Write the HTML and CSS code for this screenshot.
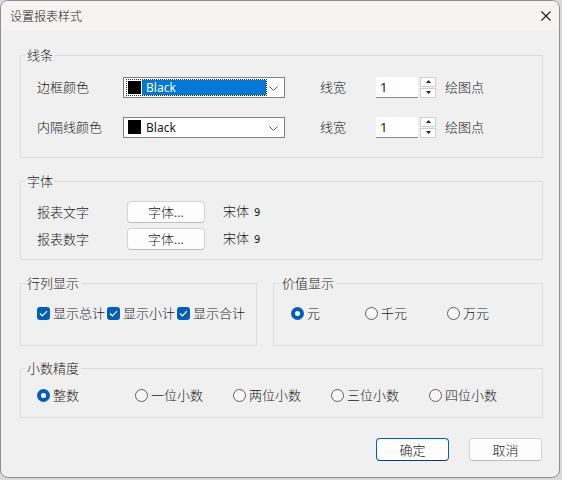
FILE: index.html
```html
<!DOCTYPE html>
<html lang="zh-CN">
<head>
  <meta charset="UTF-8" />
  <title>设置报表样式</title>
  <link rel="stylesheet" href="styles.css">
</head>
<body>
  <div class="dialog">
    <div class="titlebar">
      <span class="title">设置报表样式</span>
      <svg class="close" width="10" height="10" viewBox="0 0 10 10">
        <path d="M0.5 0.5L9.5 9.5M9.5 0.5L0.5 9.5" stroke="#1b1b1b" stroke-width="1.1" fill="none"/>
      </svg>
    </div>

    <div class="client">
      <fieldset class="group group-lines">
        <legend>线条</legend>
        <div class="rows">
          <div class="line-row">
            <span class="lbl">边框颜色</span>
            <div class="combo">
              <span class="focus-rect">
                <span class="swatch"></span>
                <span class="sel">Black</span>
              </span>
              <svg class="chev" width="9" height="5" viewBox="0 0 9 5"><path d="M0.5 0.5L4.5 4.5L8.5 0.5" stroke="#555" fill="none"/></svg>
            </div>
            <span class="lbl-w">线宽</span>
            <div class="spin">
              <span class="spin-input">1</span>
              <span class="spin-btns">
                <span class="sb"><svg width="5" height="3" viewBox="0 0 5 3"><path d="M0 3L2.5 0L5 3Z" fill="#222"/></svg></span>
                <span class="sb"><svg width="5" height="3" viewBox="0 0 5 3"><path d="M0 0L2.5 3L5 0Z" fill="#222"/></svg></span>
              </span>
            </div>
            <span class="unit">绘图点</span>
          </div>
          <div class="line-row">
            <span class="lbl">内隔线颜色</span>
            <div class="combo">
              <span class="swatch"></span>
              <span class="val">Black</span>
              <svg class="chev" width="9" height="5" viewBox="0 0 9 5"><path d="M0.5 0.5L4.5 4.5L8.5 0.5" stroke="#555" fill="none"/></svg>
            </div>
            <span class="lbl-w">线宽</span>
            <div class="spin">
              <span class="spin-input">1</span>
              <span class="spin-btns">
                <span class="sb"><svg width="5" height="3" viewBox="0 0 5 3"><path d="M0 3L2.5 0L5 3Z" fill="#222"/></svg></span>
                <span class="sb"><svg width="5" height="3" viewBox="0 0 5 3"><path d="M0 0L2.5 3L5 0Z" fill="#222"/></svg></span>
              </span>
            </div>
            <span class="unit">绘图点</span>
          </div>
        </div>
      </fieldset>

      <fieldset class="group group-font">
        <legend>字体</legend>
        <div class="rows">
          <div class="font-row">
            <span class="lbl">报表文字</span>
            <button class="btn">字体...</button>
            <span class="font-name">宋体 <span class="size">9</span></span>
          </div>
          <div class="font-row">
            <span class="lbl">报表数字</span>
            <button class="btn">字体...</button>
            <span class="font-name">宋体 <span class="size">9</span></span>
          </div>
        </div>
      </fieldset>

      <div class="pair">
        <fieldset class="group group-rowcol">
          <legend>行列显示</legend>
          <div class="opts">
            <label class="check"><span class="cb"><svg width="9" height="7" viewBox="0 0 9 7"><path d="M1 3.5L3.4 5.8L8 1.2" stroke="#fff" stroke-width="1.2" fill="none"/></svg></span>显示总计</label>
            <label class="check"><span class="cb"><svg width="9" height="7" viewBox="0 0 9 7"><path d="M1 3.5L3.4 5.8L8 1.2" stroke="#fff" stroke-width="1.2" fill="none"/></svg></span>显示小计</label>
            <label class="check"><span class="cb"><svg width="9" height="7" viewBox="0 0 9 7"><path d="M1 3.5L3.4 5.8L8 1.2" stroke="#fff" stroke-width="1.2" fill="none"/></svg></span>显示合计</label>
          </div>
        </fieldset>

        <fieldset class="group group-value">
          <legend>价值显示</legend>
          <div class="opts">
            <label class="radio w74"><span class="rb on"></span>元</label>
            <label class="radio w82"><span class="rb"></span>千元</label>
            <label class="radio"><span class="rb"></span>万元</label>
          </div>
        </fieldset>
      </div>

      <fieldset class="group group-decimal">
        <legend>小数精度</legend>
        <div class="opts">
          <label class="radio w98"><span class="rb on"></span>整数</label>
          <label class="radio w98"><span class="rb"></span>一位小数</label>
          <label class="radio w98"><span class="rb"></span>两位小数</label>
          <label class="radio w98"><span class="rb"></span>三位小数</label>
          <label class="radio"><span class="rb"></span>四位小数</label>
        </div>
      </fieldset>

      <div class="actions">
        <button class="btn btn-action default">确定</button>
        <button class="btn btn-action">取消</button>
      </div>
    </div>
  </div>
</body>
</html>
```

FILE: styles.css
```css
body {
  margin: 0;
  padding: 0;
  background-color: #d9d9d9;
  font-family: "Noto Sans CJK SC", "Noto Sans", sans-serif;
  font-size: 13px;
  font-weight: 300;
  color: #1a1a1a;
}

.dialog {
  width: 560px;
  height: 478px;
  box-sizing: border-box;
  border: 1px solid #8e8e8e;
  border-radius: 8px;
  overflow: hidden;
  background-color: #f0f0f0;
}

.titlebar {
  height: 29px;
  display: flex;
  align-items: center;
  justify-content: space-between;
  padding: 0 8px 0 9px;
  background-color: #f6f3f2;
}

.title {
  font-size: 12px;
  line-height: 29px;
  color: #1a1a1a;
}

.client {
  padding: 16px 16px 0 19px;
}

.group {
  margin: 0;
  padding: 0;
  min-width: 0;
  border: 1px solid #dcdcdc;
}

.group legend {
  margin-left: 4px;
  padding: 0 2px;
  font-size: 13px;
  line-height: 18px;
}

.group-lines {
  padding: 12px 0 19px;
}

.rows {
  display: flex;
  flex-direction: column;
  padding-left: 16px;
}

.group-lines .rows {
  gap: 18px;
}

.line-row {
  display: flex;
  align-items: center;
  height: 22px;
}

.lbl {
  width: 86px;
  line-height: 18px;
}

.combo {
  width: 162px;
  height: 21px;
  box-sizing: border-box;
  border: 1px solid #7f7f7f;
  background-color: #fff;
  display: flex;
  align-items: center;
  padding-left: 4px;
  position: relative;
  font-family: "Noto Sans", sans-serif;
  font-weight: 400;
  font-size: 12px;
}

.focus-rect {
  display: flex;
  align-items: center;
  width: 141px;
  height: 17px;
  box-sizing: border-box;
  margin-left: -2px;
  outline: 1px dotted #333;
  outline-offset: -1px;
  padding: 0 1px;
}

.swatch {
  width: 13px;
  height: 14px;
  background-color: #000;
  flex: none;
}

.focus-rect .swatch {
  box-sizing: content-box;
  width: 13px;
  height: 13px;
  border: 1px solid #fff;
}

.sel {
  flex: 1;
  height: 15px;
  line-height: 15px;
  padding-left: 4px;
  background-color: #0078d7;
  color: #fff;
}

.val {
  margin-left: 5px;
  line-height: 15px;
}

.chev {
  position: absolute;
  right: 6px;
  top: 8px;
}

.lbl-w {
  margin-left: 35px;
  width: 56px;
  line-height: 18px;
}

.spin {
  display: flex;
  align-items: center;
}

.spin-input {
  width: 42px;
  height: 21px;
  box-sizing: border-box;
  background-color: #fff;
  border-bottom: 1px solid #8a8a8a;
  padding-left: 4px;
  font-family: "Noto Sans", sans-serif;
  font-weight: 400;
  font-size: 13px;
  line-height: 20px;
}

.spin-btns {
  display: flex;
  flex-direction: column;
  margin-left: 2px;
}

.sb {
  width: 16px;
  height: 10px;
  box-sizing: border-box;
  border: 1px solid #d0d0d0;
  background-color: #fcfcfc;
  display: flex;
  align-items: center;
  justify-content: center;
}

.sb + .sb {
  margin-top: 1px;
}

.unit {
  margin-left: 9px;
  line-height: 18px;
}

.group-font {
  margin-top: 14px;
  padding: 11px 0 9px;
}

.group-font .rows {
  gap: 5px;
}

.font-row {
  display: flex;
  align-items: center;
  height: 22px;
}

.group-font .lbl {
  width: 90px;
}

.btn {
  font-family: "Noto Sans CJK SC", "Noto Sans", sans-serif;
  font-size: 13px;
  font-weight: 300;
  color: #1a1a1a;
  background-color: #fdfdfd;
  border: 1px solid #d3d3d3;
  border-bottom-color: #bdbdbd;
  border-radius: 4px;
  padding: 0;
  cursor: pointer;
}

.font-row .btn {
  width: 78px;
  height: 22px;
  line-height: 18px;
}

.font-name {
  margin-left: 18px;
  line-height: 18px;
}

.size {
  font-family: "DejaVu Sans", sans-serif;
  font-weight: 400;
  font-size: 10px;
  margin-left: 2px;
}

.pair {
  display: flex;
  gap: 16px;
  margin-top: 14px;
}

.group-rowcol {
  width: 237px;
  box-sizing: border-box;
  padding: 12px 0 23px;
}

.group-value {
  width: 270px;
  box-sizing: border-box;
  padding: 12px 0 23px;
}

.group-value legend {
  margin-left: 6px;
}

.opts {
  display: flex;
  align-items: center;
  height: 18px;
  padding-left: 16px;
}

.group-value .opts {
  padding-left: 17px;
}

.check,
.radio {
  display: flex;
  align-items: center;
  line-height: 18px;
  flex: none;
}

.check {
  width: 70px;
}

.cb {
  width: 13px;
  height: 13px;
  border-radius: 3px;
  background-color: #005fb8;
  margin-right: 3px;
  display: flex;
  align-items: center;
  justify-content: center;
}

.rb {
  width: 13px;
  height: 13px;
  box-sizing: border-box;
  border-radius: 50%;
  border: 1px solid #5f5f5f;
  background-color: #f7f7f7;
  margin-right: 3px;
}

.rb.on {
  border: 4px solid #005fb8;
  background-color: #fff;
}

.w74 { width: 74px; }
.w82 { width: 82px; }
.w98 { width: 98px; }

.group-decimal {
  margin-top: 13px;
  padding: 9px 0 13px;
}

.actions {
  display: flex;
  justify-content: flex-end;
  gap: 20px;
  margin-top: 20px;
  margin-right: 1px;
}

.btn-action {
  width: 73px;
  height: 23px;
  line-height: 20px;
}

.btn-action.default {
  border: 1px solid #005fb8;
  border-bottom-color: #003e7a;
}
```
